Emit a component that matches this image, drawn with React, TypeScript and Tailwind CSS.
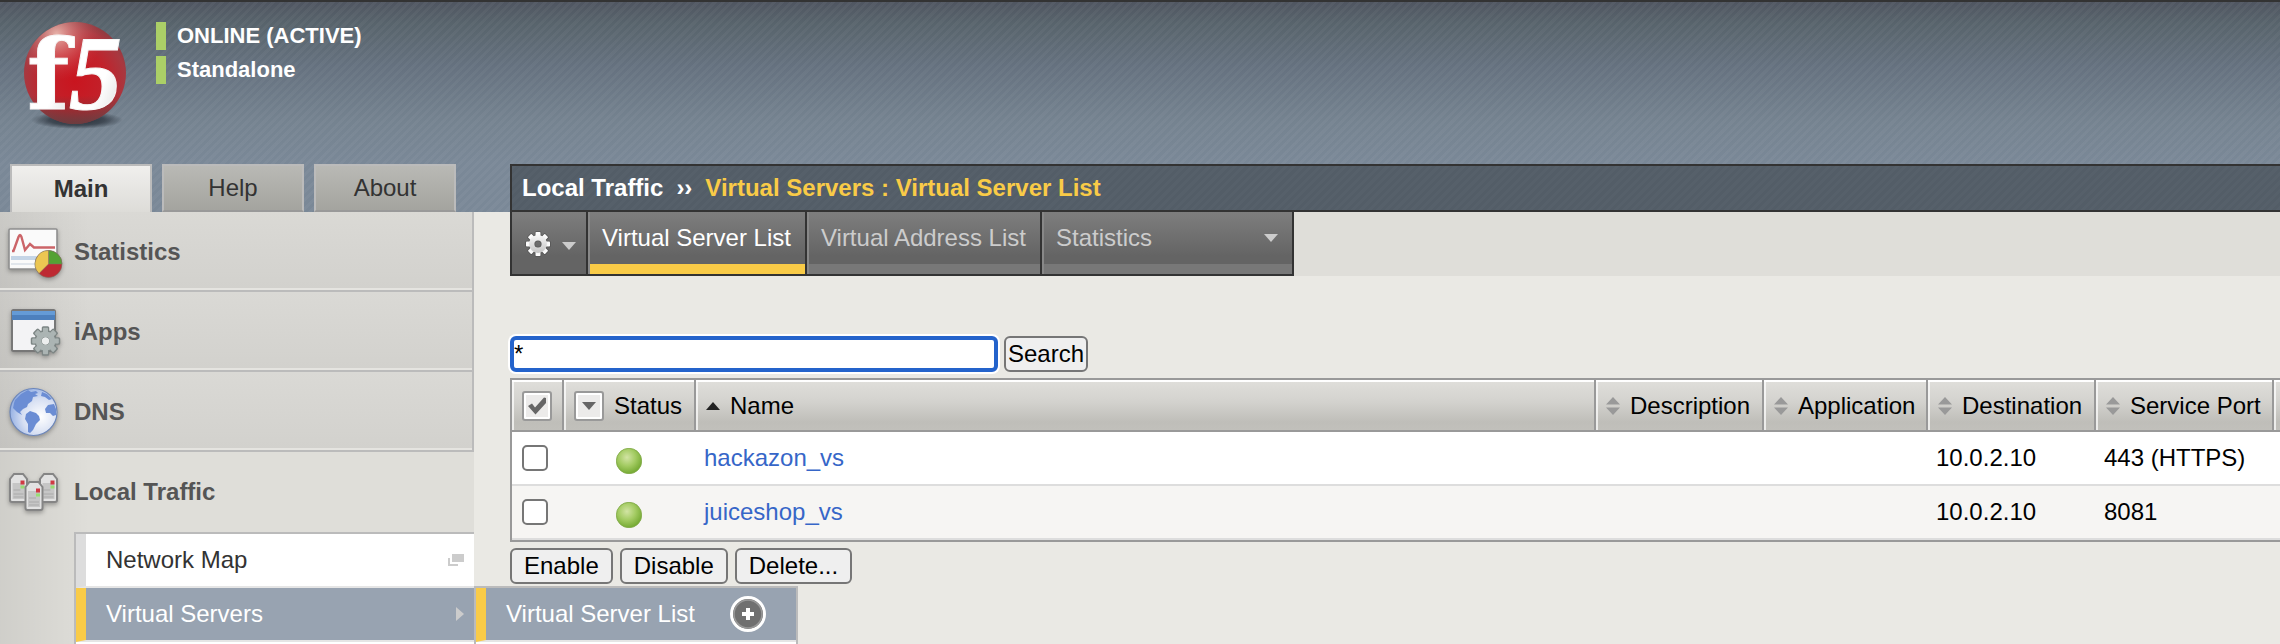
import React from "react";

const stripes =
  "bg-[repeating-linear-gradient(135deg,rgba(255,255,255,0.035)_0px,rgba(255,255,255,0.035)_3px,transparent_3px,transparent_6px),linear-gradient(180deg,#505661_0px,#58646c_22px,#667280_66px,#758390_120px,#7a8897_160px)]";

function Logo() {
  return (
    <svg viewBox="0 0 104 108" className="h-[108px] w-[104px] overflow-visible" role="img" aria-label="f5">
      <defs>
        <radialGradient id="ball" cx="0.5" cy="0.58" r="0.62">
          <stop offset="0" stopColor="#c9151f" />
          <stop offset="0.5" stopColor="#c2222b" />
          <stop offset="0.8" stopColor="#a83840" />
          <stop offset="1" stopColor="#7c3f42" />
        </radialGradient>
        <radialGradient id="shine" cx="0.32" cy="0.12" r="0.45">
          <stop offset="0" stopColor="#f3c9bd" stopOpacity="0.85" />
          <stop offset="1" stopColor="#d0404a" stopOpacity="0" />
        </radialGradient>
        <linearGradient id="low" x1="0" x2="0" y1="0" y2="1">
          <stop offset="0.72" stopColor="#444" stopOpacity="0" />
          <stop offset="1" stopColor="#444" stopOpacity="0.65" />
        </linearGradient>
        <radialGradient id="ground">
          <stop offset="0" stopColor="#222a33" stopOpacity="1" />
          <stop offset="0.6" stopColor="#2c343e" stopOpacity="0.75" />
          <stop offset="1" stopColor="#2c343e" stopOpacity="0" />
        </radialGradient>
        <linearGradient id="letters" x1="0" x2="1" y1="0" y2="1">
          <stop offset="0.6" stopColor="#fff" />
          <stop offset="1" stopColor="#d4d4d4" />
        </linearGradient>
      </defs>
      <ellipse cx="53" cy="98" rx="46" ry="9" fill="url(#ground)" />
      <circle cx="51" cy="51" r="51" fill="url(#ball)" />
      <circle cx="51" cy="51" r="51" fill="url(#shine)" />
      <circle cx="51" cy="51" r="51" fill="url(#low)" />
      <g fill="url(#letters)" stroke="#f6f6f6" strokeWidth="1" fontWeight="700">
        <text x="3" y="87" fontSize="98" fontFamily="DejaVu Serif, serif">
          f
        </text>
        <text x="45" y="87" fontSize="106" fontStyle="italic" fontFamily="Liberation Serif, serif">
          5
        </text>
      </g>
    </svg>
  );
}

function Teeth({ cx, cy, r, w }: { cx: number; cy: number; r: number; w: number }) {
  return (
    <>
      {[0, 45, 90, 135, 180, 225, 270, 315].map((a) => (
        <rect
          key={a}
          x={cx - w / 2}
          y={cy - r}
          width={w}
          height={r * 0.5}
          rx="0.8"
          transform={`rotate(${a} ${cx} ${cy})`}
        />
      ))}
      <path
        fillRule="evenodd"
        d={`M${cx - r * 0.74} ${cy}a${r * 0.74} ${r * 0.74} 0 1 0 ${r * 1.48} 0a${r * 0.74} ${r * 0.74} 0 1 0 ${-r * 1.48} 0zM${cx - r * 0.3} ${cy}a${r * 0.3} ${r * 0.3} 0 1 0 ${r * 0.6} 0a${r * 0.3} ${r * 0.3} 0 1 0 ${-r * 0.6} 0z`}
      />
    </>
  );
}

const iconClass = "h-14 w-16 shrink-0 drop-shadow-[0_2px_2px_rgba(0,0,0,0.3)]";

function StatisticsIcon() {
  return (
    <svg viewBox="0 0 64 56" className={iconClass} aria-hidden="true">
      <rect x="9" y="5" width="48" height="40" rx="1" fill="#fafafa" stroke="#8f8f8f" strokeWidth="1.6" />
      <rect x="11" y="32" width="44" height="4" fill="#c5d5e6" />
      <path d="M11 40h44" stroke="#e1e6ec" strokeWidth="2" />
      <path d="M12 27h1.500l5-14q1.500-4 3 0l3.500 13 5-6 4 3.500h21" fill="none" stroke="#cb6468" strokeWidth="2.400" />
      <g stroke="#776" strokeWidth="0.5">
        <circle cx="48.500" cy="40" r="13.500" fill="#be2a33" />
        <path d="M48.500 40V26.500A13.500 13.500 0 0 1 62 40z" fill="#54a234" />
        <path d="M48.500 40V26.500A13.500 13.500 0 0 0 39 49.500z" fill="#ecc652" />
      </g>
    </svg>
  );
}

function IAppsIcon() {
  return (
    <svg viewBox="0 0 64 56" className={iconClass} aria-hidden="true">
      <rect x="12" y="6" width="43" height="41" rx="1.500" fill="#f3f3f5" stroke="#777" strokeWidth="2" />
      <rect x="12" y="7" width="43" height="9" fill="#4d80bd" />
      <rect x="12" y="7" width="43" height="4" fill="#659bd6" />
      <g fill="#a4adac" stroke="#7d8685" strokeWidth="1.500">
        <Teeth cx={45.5} cy={37} r={14} w={6} />
      </g>
      <g fill="#abb4b3">
        <Teeth cx={45.5} cy={37} r={13} w={5} />
      </g>
      <circle cx="45.500" cy="37" r="3.500" fill="#eceeee" />
    </svg>
  );
}

function DnsIcon() {
  return (
    <svg viewBox="0 0 64 56" className={iconClass} aria-hidden="true">
      <defs>
        <radialGradient id="sea" cx="0.65" cy="0.6" r="0.65">
          <stop offset="0" stopColor="#ffffff" />
          <stop offset="0.6" stopColor="#d5def2" />
          <stop offset="1" stopColor="#98b2e4" />
        </radialGradient>
      </defs>
      <circle cx="33.500" cy="28" r="23.500" fill="url(#sea)" stroke="#6b86bb" strokeWidth="1.200" />
      <g fill="#6b8dd4">
        <path d="M15 16l6-6 7-4 3 2 5-1 2 2-3 1 3 2-5 1-1 4-4 3-1 3-4 2-3 3 2 3-5-3-4-4 1-5z" />
        <path d="M26 30l4-3 6 2 3 3 1 4-4 4-3 6-3 3-2-1 0-8-3-5z" />
        <path d="M45 25l3-4 6-1 2 5 0 6-3 1-3-3-4 0z" />
        <path d="M42 8l5 2 5 5-3 1-4-3-4-1z" />
      </g>
    </svg>
  );
}

function Tower({ x, y }: { x: number; y: number }) {
  return (
    <g transform={`translate(${x} ${y})`}>
      <path d="M1 6L5 1h9l4 5v21q0 2-2 2H3q-2 0-2-2z" fill="#e2e2e2" stroke="#858585" strokeWidth="2" />
      <path d="M3.500 10h12v16h-12z" fill="#c6c6c6" />
      <path d="M4.500 17h7M4.500 21h10M4.500 24h10" stroke="#aaa" strokeWidth="1" />
      <rect x="11.500" y="7.500" width="4" height="4" fill="#cf3a43" />
      <rect x="11.500" y="12.500" width="4" height="3" fill="#98dd74" />
    </g>
  );
}

function LocalTrafficIcon() {
  return (
    <svg viewBox="0 0 64 56" className={iconClass} aria-hidden="true">
      <Tower x={9} y={9} />
      <Tower x={39} y={9} />
      <Tower x={24.500} y={17} />
    </svg>
  );
}

const sections = [
  { label: "Statistics", icon: <StatisticsIcon /> },
  { label: "iApps", icon: <IAppsIcon /> },
  { label: "DNS", icon: <DnsIcon /> },
];

function DownTriangle({ className }: { className: string }) {
  return (
    <svg viewBox="0 0 14 8" className={`h-2 w-3.5 shrink-0 ${className}`} aria-hidden="true">
      <path d="M0 0h14L7 8z" fill="currentColor" />
    </svg>
  );
}

function SortArrows() {
  return (
    <svg viewBox="0 0 14 18" className="h-[18px] w-3.5 shrink-0 text-[#999]" aria-hidden="true">
      <path d="M0 7.500h14L7 0zM0 10.500h14L7 18z" fill="currentColor" />
    </svg>
  );
}

function HeaderCell({ children, className = "" }: { children?: React.ReactNode; className?: string }) {
  return (
    <th
      className={`h-[52px] border-b-2 border-[#999] bg-[linear-gradient(180deg,#fff_0px,#fff_2px,transparent_2px),linear-gradient(180deg,#e0dfdb_0px,#d3d2ce_22px,#bfbeb9_42px,#c1c0bb_50px)] p-0 text-left font-normal ${className}`}
    >
      <div className="flex h-[50px] items-center border-l-2 border-white/70 pt-0.5 whitespace-nowrap">{children}</div>
    </th>
  );
}

const servers = [
  { name: "hackazon_vs", destination: "10.0.2.10", port: "443 (HTTPS)", row: "bg-white" },
  { name: "juiceshop_vs", destination: "10.0.2.10", port: "8081", row: "bg-[#f6f5f3]" },
];

const pushButton =
  "h-9 rounded-md border-2 border-[#767676] bg-[#efefef] leading-8 text-black whitespace-nowrap";
const iconBox =
  "flex size-[30px] shrink-0 items-center justify-center rounded-[3px] border-2 border-[#999] bg-[#ecebea] shadow-[inset_0_0_0_2px_#fff]";
const toolTab =
  "flex h-[62px] flex-col border-r-2 border-r-[#333] border-l-2 border-l-[#888] bg-[linear-gradient(180deg,#7e7e7e_0px,#646464_44px)]";

export default function App() {
  return (
    <div className="flex min-h-screen flex-col overflow-hidden bg-[#eae9e4] font-['Liberation_Sans',Arial,sans-serif] text-2xl leading-8 text-[#333]">
      <header className={`border-t-2 border-[#333] ${stripes}`}>
        <div className="flex h-[162px] gap-7 pt-5 pl-6">
          <Logo />
          <div className="flex flex-col gap-1.5 text-[22px] leading-7 font-bold text-white">
            <div className="border-l-10 border-[#abcf67] pl-[11px]">ONLINE (ACTIVE)</div>
            <div className="border-l-10 border-[#abcf67] pl-[11px]">Standalone</div>
          </div>
        </div>
        <div className="flex">
          <nav className="flex w-[510px] shrink-0 gap-2.5 pl-2.5" aria-label="Panels">
            <button className="h-12 w-[142px] border-2 border-b-0 border-[#bbb] bg-linear-to-b from-[#f0efed] to-[#dddcd8] font-bold">
              Main
            </button>
            <button className="h-12 w-[142px] border-2 border-[#bbb] border-b-[#999] bg-linear-to-b from-[#b9b9b5] to-[#a4a49f]">
              Help
            </button>
            <button className="h-12 w-[142px] border-2 border-[#bbb] border-b-[#999] bg-linear-to-b from-[#b9b9b5] to-[#a4a49f]">
              About
            </button>
          </nav>
          <div className="flex h-12 flex-1 items-center border-2 border-r-0 border-[#333] bg-[repeating-linear-gradient(135deg,rgba(255,255,255,0.02)_0px,rgba(255,255,255,0.02)_3px,transparent_3px,transparent_6px)] bg-[#535d67] pl-2.5 font-bold whitespace-nowrap text-white">
            Local Traffic
            <span className="px-[13px]">››</span>
            <span className="text-[#f9cb47]">Virtual Servers : Virtual Server List</span>
          </div>
        </div>
      </header>

      <div className="flex flex-1">
        <aside className="flex w-[474px] shrink-0 flex-col bg-[linear-gradient(90deg,rgba(0,0,0,0.07)_0px,transparent_90px)] bg-[#dfded9]">
          {sections.map((s) => (
            <a
              key={s.label}
              href="#"
              className="flex h-20 items-center gap-1 border-r-2 border-b-2 border-[#bbb] bg-[linear-gradient(0deg,#e5e4e0_0px,#e5e4e0_2px,transparent_2px),linear-gradient(90deg,rgba(0,0,0,0.07)_0px,transparent_90px),linear-gradient(180deg,#dad9d5,#d2d1cd)] pt-0.5 font-bold text-[#555]"
            >
              {s.icon}
              <span className="pl-1.5">{s.label}</span>
            </a>
          ))}
          <a href="#" className="flex h-20 items-center gap-1 font-bold text-[#555]">
            <LocalTrafficIcon />
            <span className="pl-1.5">Local Traffic</span>
          </a>
          <ul className="ml-[74px] flex-1 border-t-2 border-l-2 border-[#bbb] bg-white">
            <li>
              <a
                href="#"
                className="flex h-[54px] items-center justify-between border-b-2 border-l-10 border-[#e5e5e5] border-l-[#ddd] bg-white pr-2.5 pl-5"
              >
                Network Map
                <svg viewBox="0 0 16 12" className="h-3 w-4" aria-hidden="true">
                  <path d="M4 0h12v8H4z" fill="#ccc" />
                  <path d="M1 4v7h9" fill="none" stroke="#ccc" strokeWidth="2" />
                </svg>
              </a>
            </li>
            <li className="relative">
              <a
                href="#"
                className="flex h-[54px] items-center justify-between border-b-2 border-l-10 border-[#e5e5e5] border-l-[#f9cb47] bg-[#98a3b1] pr-2.5 pl-5 text-white"
              >
                Virtual Servers
                <svg viewBox="0 0 8 14" className="h-3.5 w-2" aria-hidden="true">
                  <path d="M0 0v14l8-7z" fill="#ccc" />
                </svg>
              </a>
              <div className="absolute -top-0.5 left-full z-10 w-81 border-2 border-b-0 border-[#bbb] bg-white pb-0.5">
                <a
                  href="#"
                  className="flex h-[54px] items-center gap-[34px] border-b-2 border-l-10 border-[#e5e5e5] border-l-[#f9cb47] bg-[#98a3b1] pl-5 whitespace-nowrap text-white"
                >
                  Virtual Server List
                  <svg viewBox="0 0 38 38" className="size-[38px] shrink-0" aria-hidden="true">
                    <circle cx="19" cy="19" r="16.500" fill="#707070" stroke="#fff" strokeWidth="3" />
                    <circle cx="19" cy="19" r="14" fill="none" stroke="#999" strokeWidth="1.500" />
                    <path d="M19 13v12M13 19h12" stroke="#fff" strokeWidth="4" />
                  </svg>
                </a>
              </div>
            </li>
          </ul>
        </aside>

        <main className="ml-9 min-w-0 flex-1">
          <div className="flex bg-[#dfded9]">
            <nav className="flex border-b-2 border-l-2 border-[#333]" aria-label="Local Traffic">
              <button
                aria-label="Options"
                className="flex h-[62px] w-[76px] items-center gap-2.5 border-r-2 border-[#333] bg-[linear-gradient(180deg,#7e7e7e_0px,#646464_44px)] pt-0.5 pl-3"
              >
                <svg viewBox="0 0 28 28" className="size-7 shrink-0" aria-hidden="true">
                  <defs>
                    <linearGradient id="gear" gradientUnits="userSpaceOnUse" x1="0" x2="0" y1="2" y2="26">
                      <stop offset="0" stopColor="#fff" />
                      <stop offset="1" stopColor="#bbb" />
                    </linearGradient>
                  </defs>
                  <g fill="none" stroke="#555" strokeWidth="1.500">
                    <Teeth cx={14} cy={14} r={12} w={5} />
                  </g>
                  <g fill="url(#gear)">
                    <Teeth cx={14} cy={14} r={12} w={5} />
                  </g>
                </svg>
                <span className="pt-1">
                  <DownTriangle className="text-[#ccc]" />
                </span>
              </button>
              <a href="#" className={`${toolTab} text-white`}>
                <span className="flex flex-1 items-center pr-3.5 pl-3 whitespace-nowrap">Virtual Server List</span>
                <span className="h-2.5 bg-[#f9cb47]" />
              </a>
              <a href="#" className={`${toolTab} text-[#ccc]`}>
                <span className="flex flex-1 items-center pr-3.5 pl-3 whitespace-nowrap">Virtual Address List</span>
                <span className="h-2.5 bg-[#787878]" />
              </a>
              <a href="#" className={`${toolTab} w-[252px] text-[#ccc]`}>
                <span className="flex flex-1 items-center justify-between pr-3.5 pl-3">
                  Statistics
                  <DownTriangle className="text-[#ccc]" />
                </span>
                <span className="h-2.5 bg-[#787878]" />
              </a>
            </nav>
          </div>

          <form className="flex gap-1.5 pt-15" onSubmit={(e) => e.preventDefault()}>
            <input
              type="text"
              aria-label="Search virtual servers"
              defaultValue="*"
              className="h-9 w-[488px] rounded-md border-4 border-[#2463cb] bg-white leading-7 text-black shadow-[0_0_0_2px_#fff] outline-none"
            />
            <button type="submit" className={`${pushButton} px-0.5`}>
              Search
            </button>
          </form>

          <table className="mt-1.5 w-full table-fixed border-separate border-spacing-0 border-2 border-r-0 border-[#999] text-black">
            <colgroup>
              <col className="w-[52px]" />
              <col className="w-[132px]" />
              <col />
              <col className="w-[168px]" />
              <col className="w-[164px]" />
              <col className="w-[168px]" />
              <col className="w-[178px]" />
              <col className="w-1.5" />
            </colgroup>
            <thead>
              <tr>
                <HeaderCell className="border-r-2">
                  <button aria-label="Select all" className={`${iconBox} ml-2`}>
                    <svg viewBox="0 0 20 18" className="h-[18px] w-5" aria-hidden="true">
                      <path d="M1 9l4-2.500 3 4L17 0.500 19 1v5L8.500 17.500z" fill="#666" />
                    </svg>
                  </button>
                </HeaderCell>
                <HeaderCell className="border-r-2">
                  <button aria-label="Filter status" className={`${iconBox} mr-2.5 ml-2`}>
                    <DownTriangle className="text-[#666]" />
                  </button>
                  Status
                </HeaderCell>
                <HeaderCell className="border-r-2">
                  <svg viewBox="0 0 14 8" className="mr-2.5 ml-2 h-2 w-3.5" aria-hidden="true">
                    <path d="M0 8h14L7 0z" fill="#222" />
                  </svg>
                  Name
                </HeaderCell>
                {["Description", "Application", "Destination", "Service Port"].map((h) => (
                  <HeaderCell key={h} className="border-r-2">
                    <span className="flex items-center gap-2.5 pl-2">
                      <SortArrows />
                      {h}
                    </span>
                  </HeaderCell>
                ))}
                <HeaderCell />
              </tr>
            </thead>
            <tbody>
              {servers.map((s) => (
                <tr key={s.name} className={`${s.row} *:h-[54px] *:border-b-2 *:border-[#ddd] *:p-0 *:whitespace-nowrap`}>
                  <td>
                    <input
                      type="checkbox"
                      aria-label={`Select ${s.name}`}
                      className="ml-2.5 block size-[26px] appearance-none rounded-[5px] border-2 border-[#767676] bg-white"
                    />
                  </td>
                  <td>
                    <svg viewBox="0 0 26 26" className="mt-1.5 ml-[52px] size-[26px]" role="img" aria-label="Available">
                      <defs>
                        <radialGradient id={`dot-${s.name}`} cx="0.42" cy="0.36" r="0.62">
                          <stop offset="0" stopColor="#d2e4a4" />
                          <stop offset="0.55" stopColor="#a3cb62" />
                          <stop offset="1" stopColor="#78ac36" />
                        </radialGradient>
                      </defs>
                      <circle cx="13" cy="13" r="12.700" fill={`url(#dot-${s.name})`} stroke="#7da744" strokeWidth="0.800" />
                    </svg>
                  </td>
                  <td>
                    <a href="#" className="pl-2 text-[#3666c8]">
                      {s.name}
                    </a>
                  </td>
                  <td />
                  <td />
                  <td>
                    <span className="pl-2">{s.destination}</span>
                  </td>
                  <td>
                    <span className="pl-2">{s.port}</span>
                  </td>
                  <td />
                </tr>
              ))}
            </tbody>
          </table>

          <div className="flex gap-[7px] pt-1.5">
            <button className={`${pushButton} px-3`}>Enable</button>
            <button className={`${pushButton} px-3`}>Disable</button>
            <button className={`${pushButton} px-3`}>Delete...</button>
          </div>
        </main>
      </div>
    </div>
  );
}
